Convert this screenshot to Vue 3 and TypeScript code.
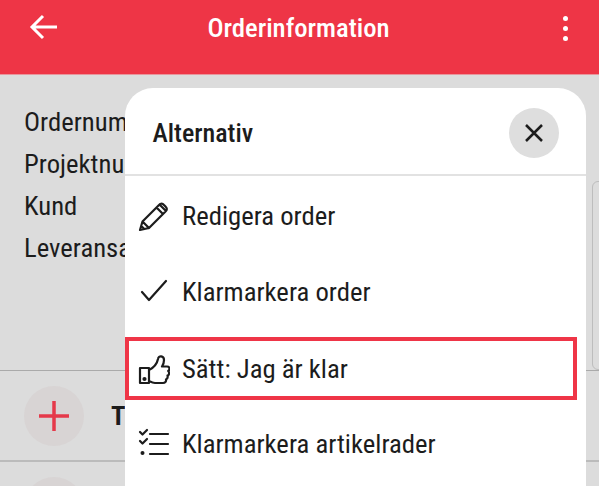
<template>
  <div class="screen">
    <header class="topbar">
      <svg class="back" viewBox="0 0 30 28" width="30" height="28">
        <path d="M28 14H3M14 3 3 14l11 11" />
      </svg>
      <span class="title">Orderinformation</span>
      <span class="dots"><i></i><i></i><i></i></span>
    </header>

    <main class="content">
      <div class="info">
        <div v-for="label in infoLabels" :key="label" class="info-row">{{ label }}</div>
      </div>
      <div class="side-tab"></div>
      <div class="rows">
        <div v-for="row in rows" :key="row" class="row">
          <span class="round-add">
            <svg viewBox="0 0 32 32" width="32" height="32"><path d="M16 1v30M1 16h30" /></svg>
          </span>
          <span class="row-label">{{ row }}</span>
        </div>
      </div>
    </main>

    <section class="sheet">
      <div class="sheet-head">
        <span class="sheet-title">Alternativ</span>
        <button class="close">
          <svg viewBox="0 0 20 20" width="20" height="20"><path d="M2 2l16 16M18 2 2 18" /></svg>
        </button>
      </div>
      <ul class="menu">
        <li v-for="item in items" :key="item.label" class="menu-item" :class="{ marked: item.marked }">
          <svg class="menu-icon" viewBox="0 0 32 32" width="32" height="32" v-html="item.icon"></svg>
          <span class="menu-label">{{ item.label }}</span>
        </li>
      </ul>
    </section>
  </div>
</template>

<script setup lang="ts">
const infoLabels = ['Ordernummer', 'Projektnummer', 'Kund', 'Leveransadress']
const rows = ['Tid', '']

const items = [
  {
    label: 'Redigera order',
    icon: '<path d="M2 30l2.500-8.500L21 5c1.800-1.800 3.500-1.800 5 0l1.500 1.500c1.800 1.800 1.800 3.500 0 5L11 28zM4.500 21.500 11 28M3.300 26l3 3M18.500 7.500l6.500 6.500M21.500 4.500l6.500 6.500" />',
  },
  {
    label: 'Klarmarkera order',
    icon: '<path d="M4 16l7 8L28 5" />',
  },
  {
    label: 'Sätt: Jag är klar',
    marked: true,
    icon: '<path d="M2 15h9v15H2zM11 17c4-2 8-6 9-11 .5-4 6-3.500 6 1 0 2.500-1 5-2 6.500h5c2.800 0 3.200 3 1.200 4.500 1.500 1.500 1 4-.7 4.500.5 2-.3 3.500-1.500 4 .5 2-1 3.500-3 3.500H17c-2 0-4-1-6-2" /><circle cx="6.500" cy="26" r="1" fill="currentColor" />',
  },
  {
    label: 'Klarmarkera artikelrader',
    icon: '<path d="M2 4l2.500 2.500L9 2M2 13l2.500 2.500L9 11M12 6h18M12 16h18M12 26h18" /><circle cx="4.500" cy="25" r="2" fill="currentColor" stroke="none" />',
  },
]
</script>

<style>
html,
body {
  margin: 0;
  overflow: hidden;
  background: #dcdcdc;
}
</style>

<style scoped>
.screen {
  position: relative;
  width: 599px;
  height: 486px;
  overflow: hidden;
  background: #dcdcdc;
  color: #1c1c1c;
  font-family: Roboto, "Liberation Sans", sans-serif;
  font-size: 26.7px;
  font-stretch: 75%;
}

.topbar {
  height: 75px;
  box-sizing: border-box;
  padding: 13px 31px 0 29px;
  display: grid;
  grid-template-columns: 1fr auto 1fr;
  align-items: start;
  background: #ee3546;
  color: #fff;
  border-bottom: 1px solid #e8959c;
}

.back {
  fill: none;
  stroke: #fff;
  stroke-width: 3;
}

.title {
  font-weight: 500;
  line-height: 30px;
}

.dots {
  justify-self: end;
  display: flex;
  flex-direction: column;
  gap: 5px;
  padding-top: 2.500px;
}

.dots i {
  width: 5px;
  height: 5px;
  border-radius: 50%;
  background: #fff;
}

.content {
  position: relative;
  height: 411px;
}

.info {
  padding: 26px 0 0 24px;
}

.info-row {
  height: 42px;
  line-height: 42px;
}

.side-tab {
  position: absolute;
  left: 592px;
  top: 106px;
  width: 20px;
  height: 189px;
  box-sizing: border-box;
  border: 1px solid #bdbdbd;
  border-radius: 6px;
}

.rows {
  margin-top: 101px;
  border-top: 1px solid #aaa;
}

.row {
  height: 89px;
  display: flex;
  align-items: center;
  gap: 27px;
  padding-left: 24px;
  border-bottom: 2px solid #bbb;
}

.round-add {
  width: 60px;
  height: 60px;
  display: flex;
  align-items: center;
  justify-content: center;
  border-radius: 50%;
  background: #d8d4d4;
}

.round-add svg {
  fill: none;
  stroke: #e5394a;
  stroke-width: 3.500;
}

.row-label {
  font-weight: 700;
}

.sheet {
  position: absolute;
  left: 125px;
  top: 88px;
  width: 461px;
  height: 420px;
  background: #fff;
  border-radius: 28px 28px 0 0;
}

.sheet-head {
  height: 88px;
  display: flex;
  align-items: center;
  justify-content: space-between;
  padding: 4px 27px 0 27.500px;
  box-sizing: border-box;
  border-bottom: 2px solid #e2e2e2;
}

.sheet-title {
  font-weight: 500;
  font-size: 26px;
}

.close {
  width: 50px;
  height: 50px;
  padding: 0;
  border: none;
  border-radius: 50%;
  background: #dedede;
  display: flex;
  align-items: center;
  justify-content: center;
}

.close svg {
  fill: none;
  stroke: #1c1c1c;
  stroke-width: 2.500;
}

.menu {
  list-style: none;
  margin: 0;
  padding: 0;
}

.menu-item {
  height: 76px;
  display: flex;
  align-items: center;
  gap: 12px;
  padding-left: 13px;
  margin-right: 9px;
  box-sizing: border-box;
}

.menu-item:first-child {
  margin-top: 2px;
}

.menu-item.marked {
  height: 63px;
  margin-top: 7px;
  margin-bottom: 6px;
  border: 4px solid #ef3547;
  padding-left: 9px;
}

.menu-icon {
  flex: none;
  fill: none;
  stroke: currentColor;
  stroke-width: 2.200;
  stroke-linejoin: round;
  stroke-linecap: round;
}
</style>
